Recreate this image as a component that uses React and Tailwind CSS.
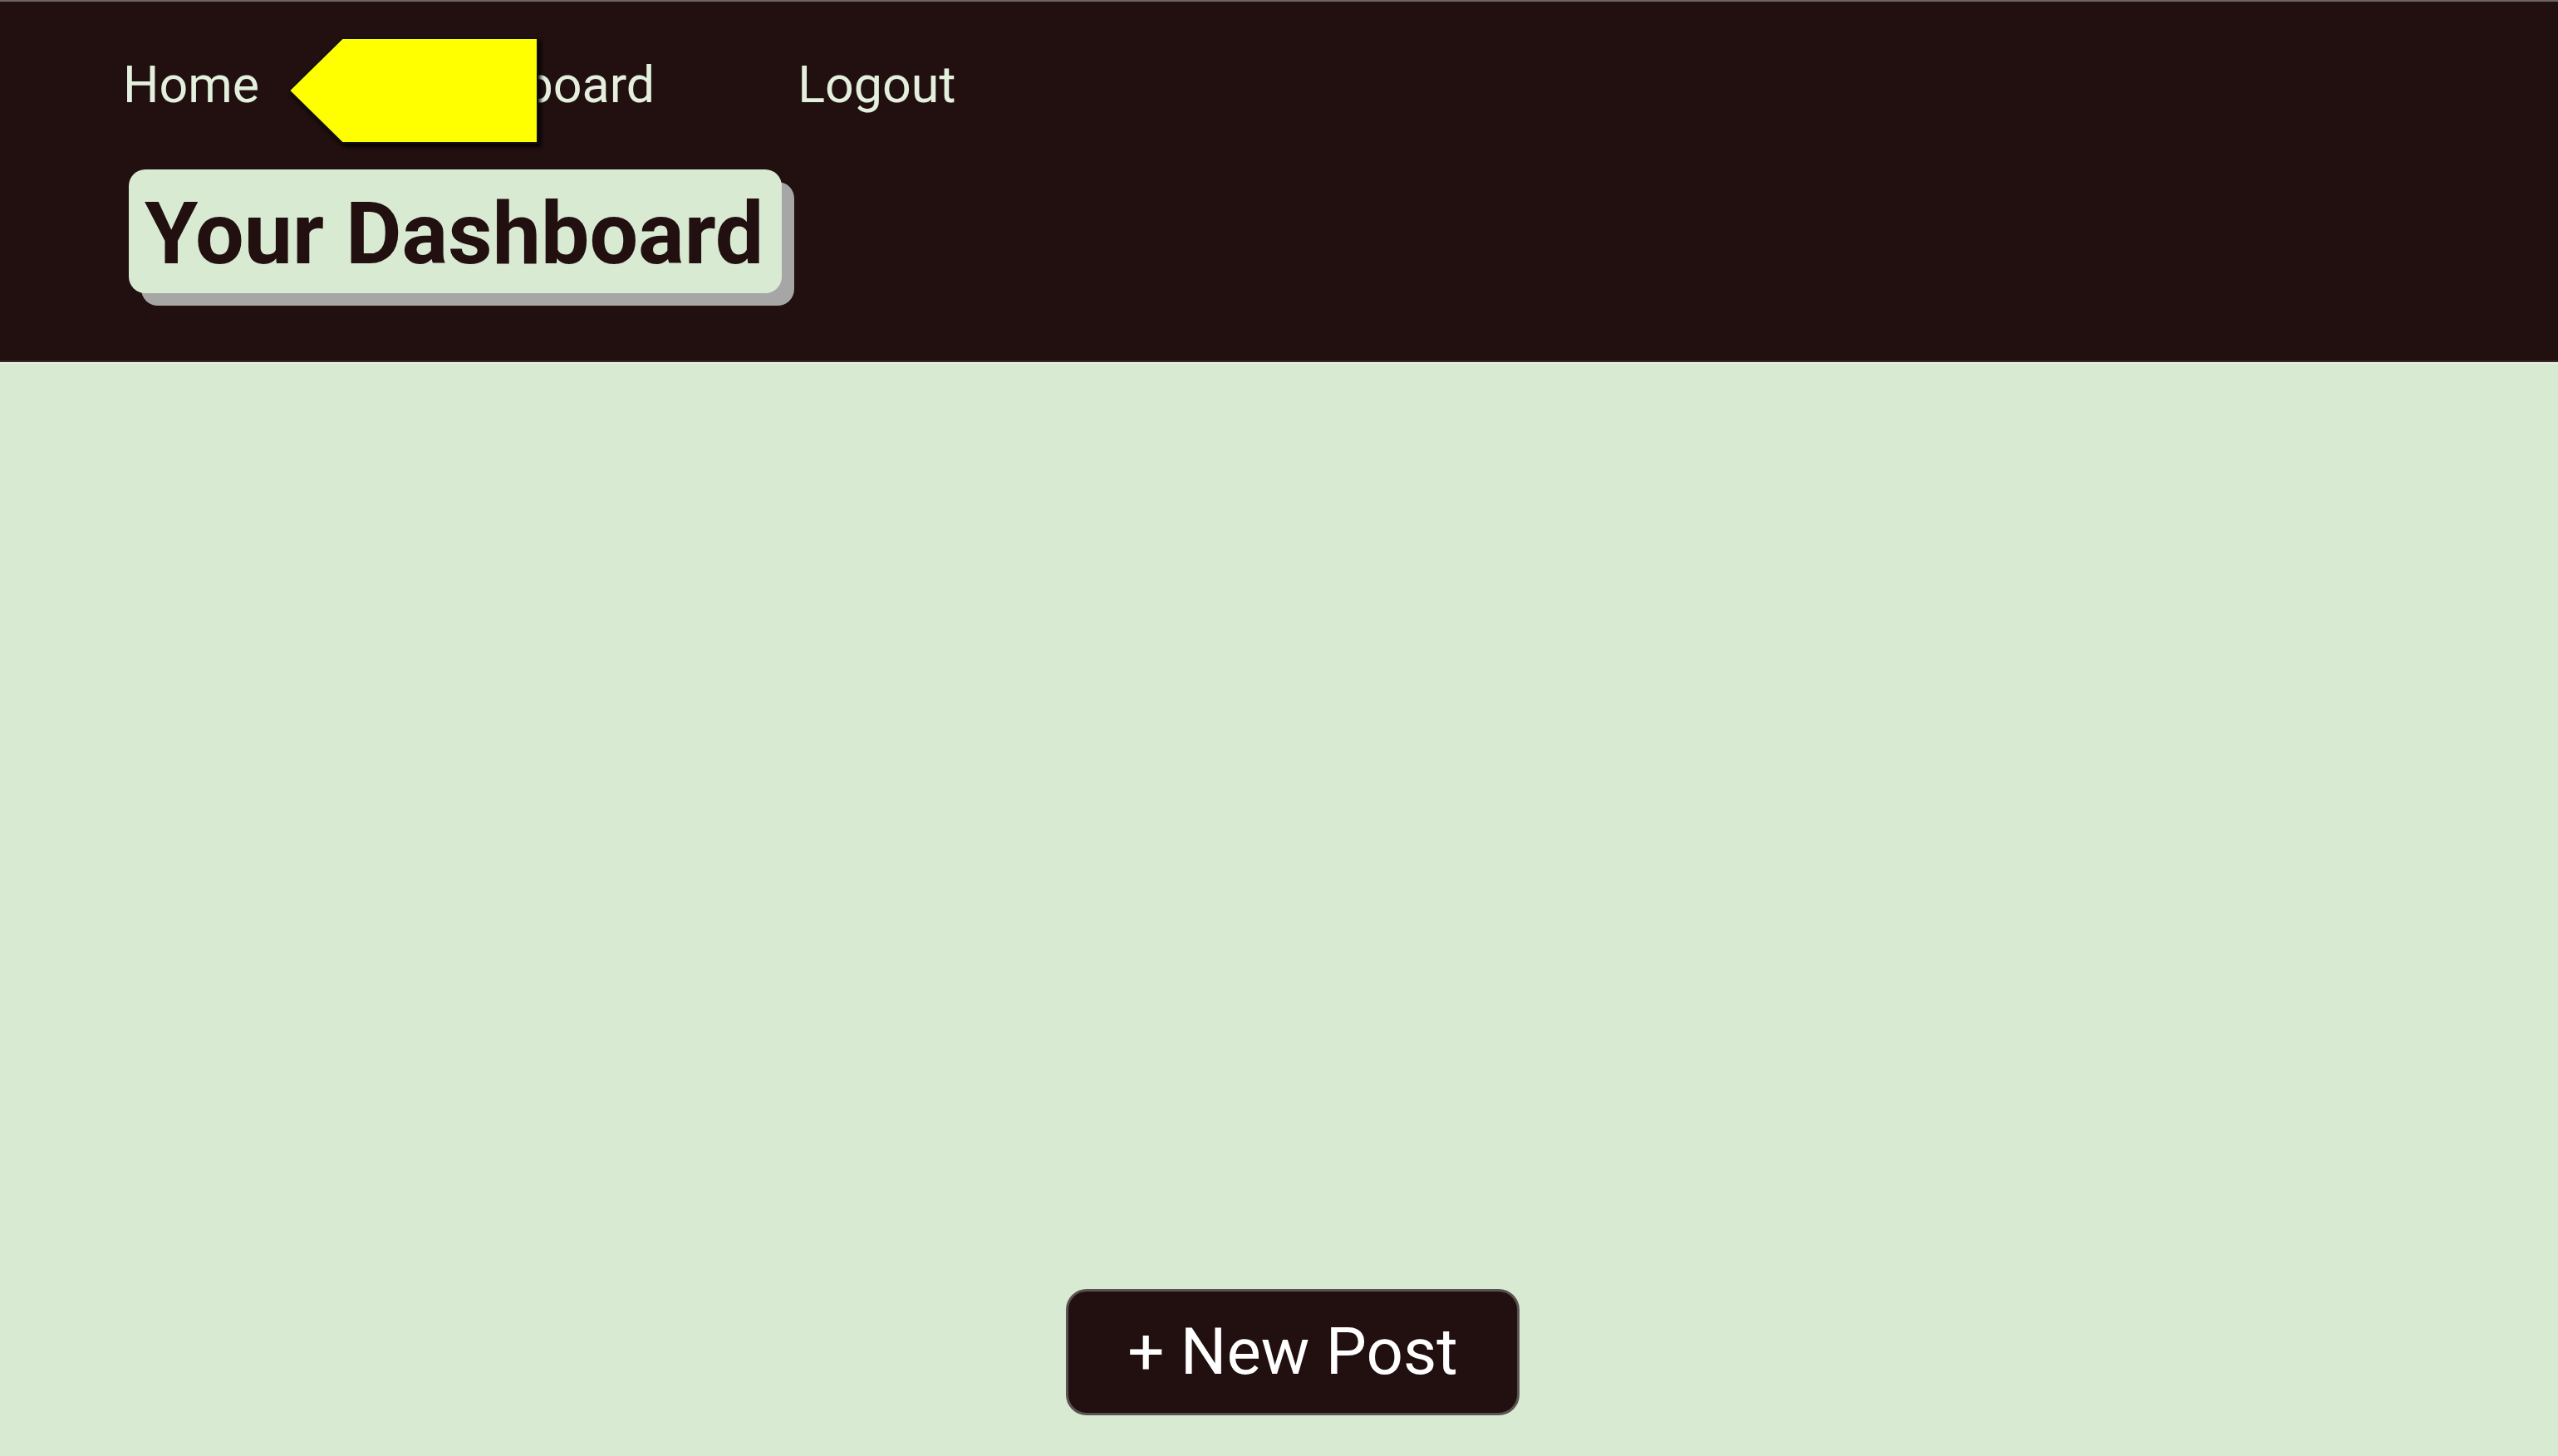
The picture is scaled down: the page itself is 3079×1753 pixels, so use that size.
const links = [
  { label: 'Home', cls: 'ml-[148px]' },
  { label: 'Dashboard', cls: 'ml-[181px]' },
  { label: 'Logout', cls: 'ml-[172px]' },
];

const App = () => {
  return (
    <div className="min-h-screen flex flex-col bg-[#d9ead3] font-['Roboto','Liberation_Sans',sans-serif]">
      {/* Header */}
      <header className="relative h-[436px] bg-[#220f10] border-t-2 border-[#6e6466] border-b-2 border-b-[#3a2a2a] flex flex-col">
        <nav className="flex items-center mt-[64px] text-[61px] leading-[72px] text-[#e3f0dd]">
          {links.map((l) => (
            <a key={l.label} href="#" className={l.cls}>
              {l.label}
            </a>
          ))}
        </nav>

        {/* redaction marker over the middle link */}
        <svg
          className="absolute left-[346px] top-[42px] drop-shadow-[3px_4px_2px_rgba(0,0,0,0.85)]"
          width="306"
          height="134"
          viewBox="0 0 306 134"
        >
          <polygon points="2,65 66,2 301,2 301,128 66,128" fill="#ffff00" stroke="#111" strokeWidth="2" />
        </svg>

        <div className="ml-[155px] mt-[66px] self-start">
          <h1 className="rounded-[20px] bg-[#d9ead3] pl-[19px] pr-[22px] pt-[27px] pb-[20px] text-[104px] leading-[102px] font-bold text-[#220f10] shadow-[15px_15px_0_#a6a6a6]">
            Your Dashboard
          </h1>
        </div>
      </header>

      {/* Main */}
      <main className="flex-1 flex flex-col justify-end items-center pl-[33px] pb-[49px] border-t-2 border-[#e6f2e1]">
        <button className="w-[546px] h-[152px] rounded-[25px] bg-[#220f10] border-[3px] border-[#5a5252] text-white text-[78px] leading-none">
          + New Post
        </button>
      </main>
    </div>
  );
};

export default App;
